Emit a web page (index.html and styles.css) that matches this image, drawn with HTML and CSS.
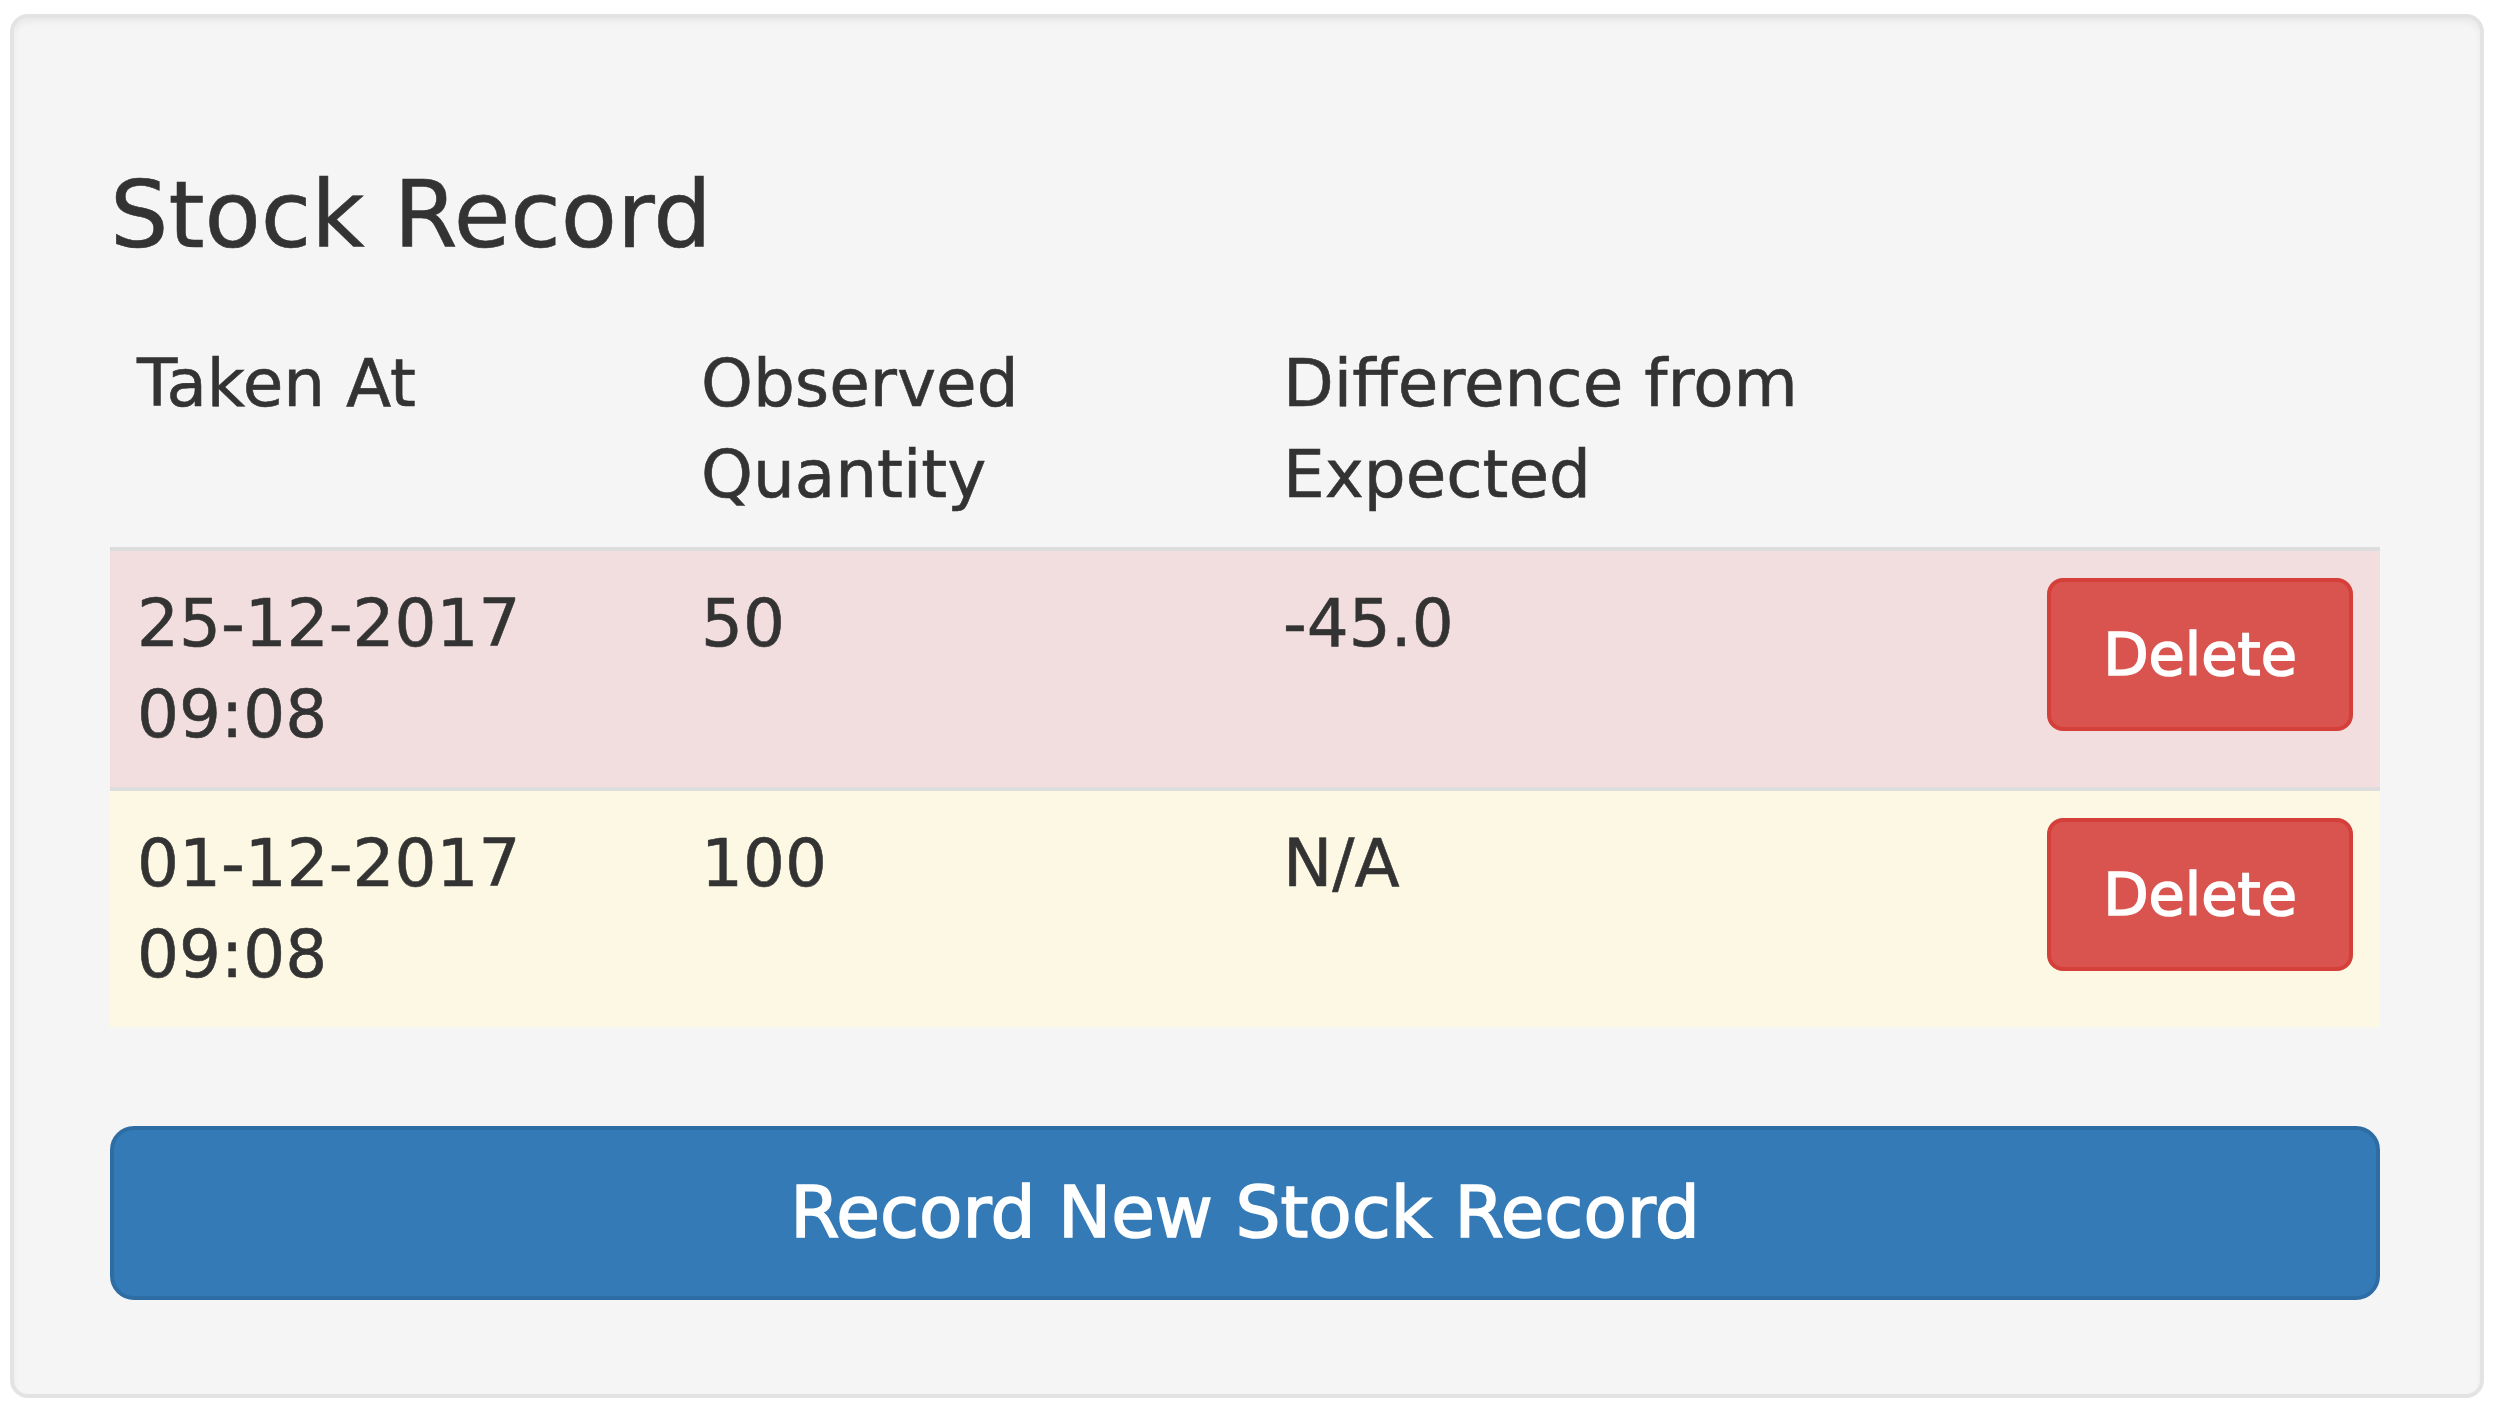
FILE: index.html
```html
<!DOCTYPE html>
<html lang="en">
<head>
    <meta charset="UTF-8">
    <title>Stock Record</title>
    <link rel="stylesheet" href="styles.css">
</head>
<body>
    <div class="well">
        <h3 class="title">Stock Record</h3>
        <table class="table">
            <thead>
                <tr>
                    <th class="col-taken">Taken At</th>
                    <th class="col-qty">Observed Quantity</th>
                    <th class="col-diff">Difference from Expected</th>
                    <th class="col-action"></th>
                </tr>
            </thead>
            <tbody>
                <tr class="danger">
                    <td>25-12-2017 09:08</td>
                    <td>50</td>
                    <td>-45.0</td>
                    <td class="action"><button type="button" class="btn btn-danger">Delete</button></td>
                </tr>
                <tr class="warning">
                    <td>01-12-2017 09:08</td>
                    <td>100</td>
                    <td>N/A</td>
                    <td class="action"><button type="button" class="btn btn-danger">Delete</button></td>
                </tr>
            </tbody>
        </table>
        <button type="button" class="btn btn-primary btn-block">Record New Stock Record</button>
    </div>
</body>
</html>
```

FILE: styles.css
```css
body {
    margin: 0;
    padding: 14px 16px 0 10px;
    font-family: "DejaVu Sans", Verdana, sans-serif;
    color: #333;
    background: #fff;
    -webkit-text-stroke: 0.6px #333;
}
.well {
    background: #f5f5f5;
    border: 4px solid #e3e3e3;
    border-radius: 18px;
    box-shadow: inset 0 4px 6px rgba(0,0,0,0.05);
    padding: 148px 100px 94px 96px;
}
.title {
    margin: 0 0 45px;
    font-size: 92px;
    font-weight: normal;
    line-height: 100px;
}
.table {
    width: 100%;
    border-collapse: collapse;
    table-layout: fixed;
    margin-bottom: 99px;
    font-size: 66px;
    line-height: 91px;
}
.table th,
.table td {
    padding: 27px;
    text-align: left;
    vertical-align: top;
}
.table th { font-weight: normal; }
.table thead th { border-bottom: 4px solid #ddd; }
.table tbody td { border-top: 4px solid #ddd; }
.col-taken { width: 510px; }
.col-qty { width: 528px; }
.col-diff { width: 707px; }
.table .action { text-align: right; }
.danger td { background: #f2dede; }
.warning td { background: #fcf8e3; }

.btn {
    font-family: inherit;
    cursor: pointer;
    border: 4px solid transparent;
    color: #fff;
    -webkit-text-stroke: 1.6px #fff;
}
.btn-danger {
    background: #d9534f;
    border-color: #d43f3a;
    font-size: 59px;
    line-height: 91px;
    padding: 27px 52px;
    border-radius: 16px;
}
.btn-primary {
    background: #337ab7;
    border-color: #2e6da4;
    font-size: 71px;
    line-height: 96px;
    padding: 35px 60px;
    border-radius: 24px;
}
.btn-block {
    display: block;
    width: 100%;
}
```
